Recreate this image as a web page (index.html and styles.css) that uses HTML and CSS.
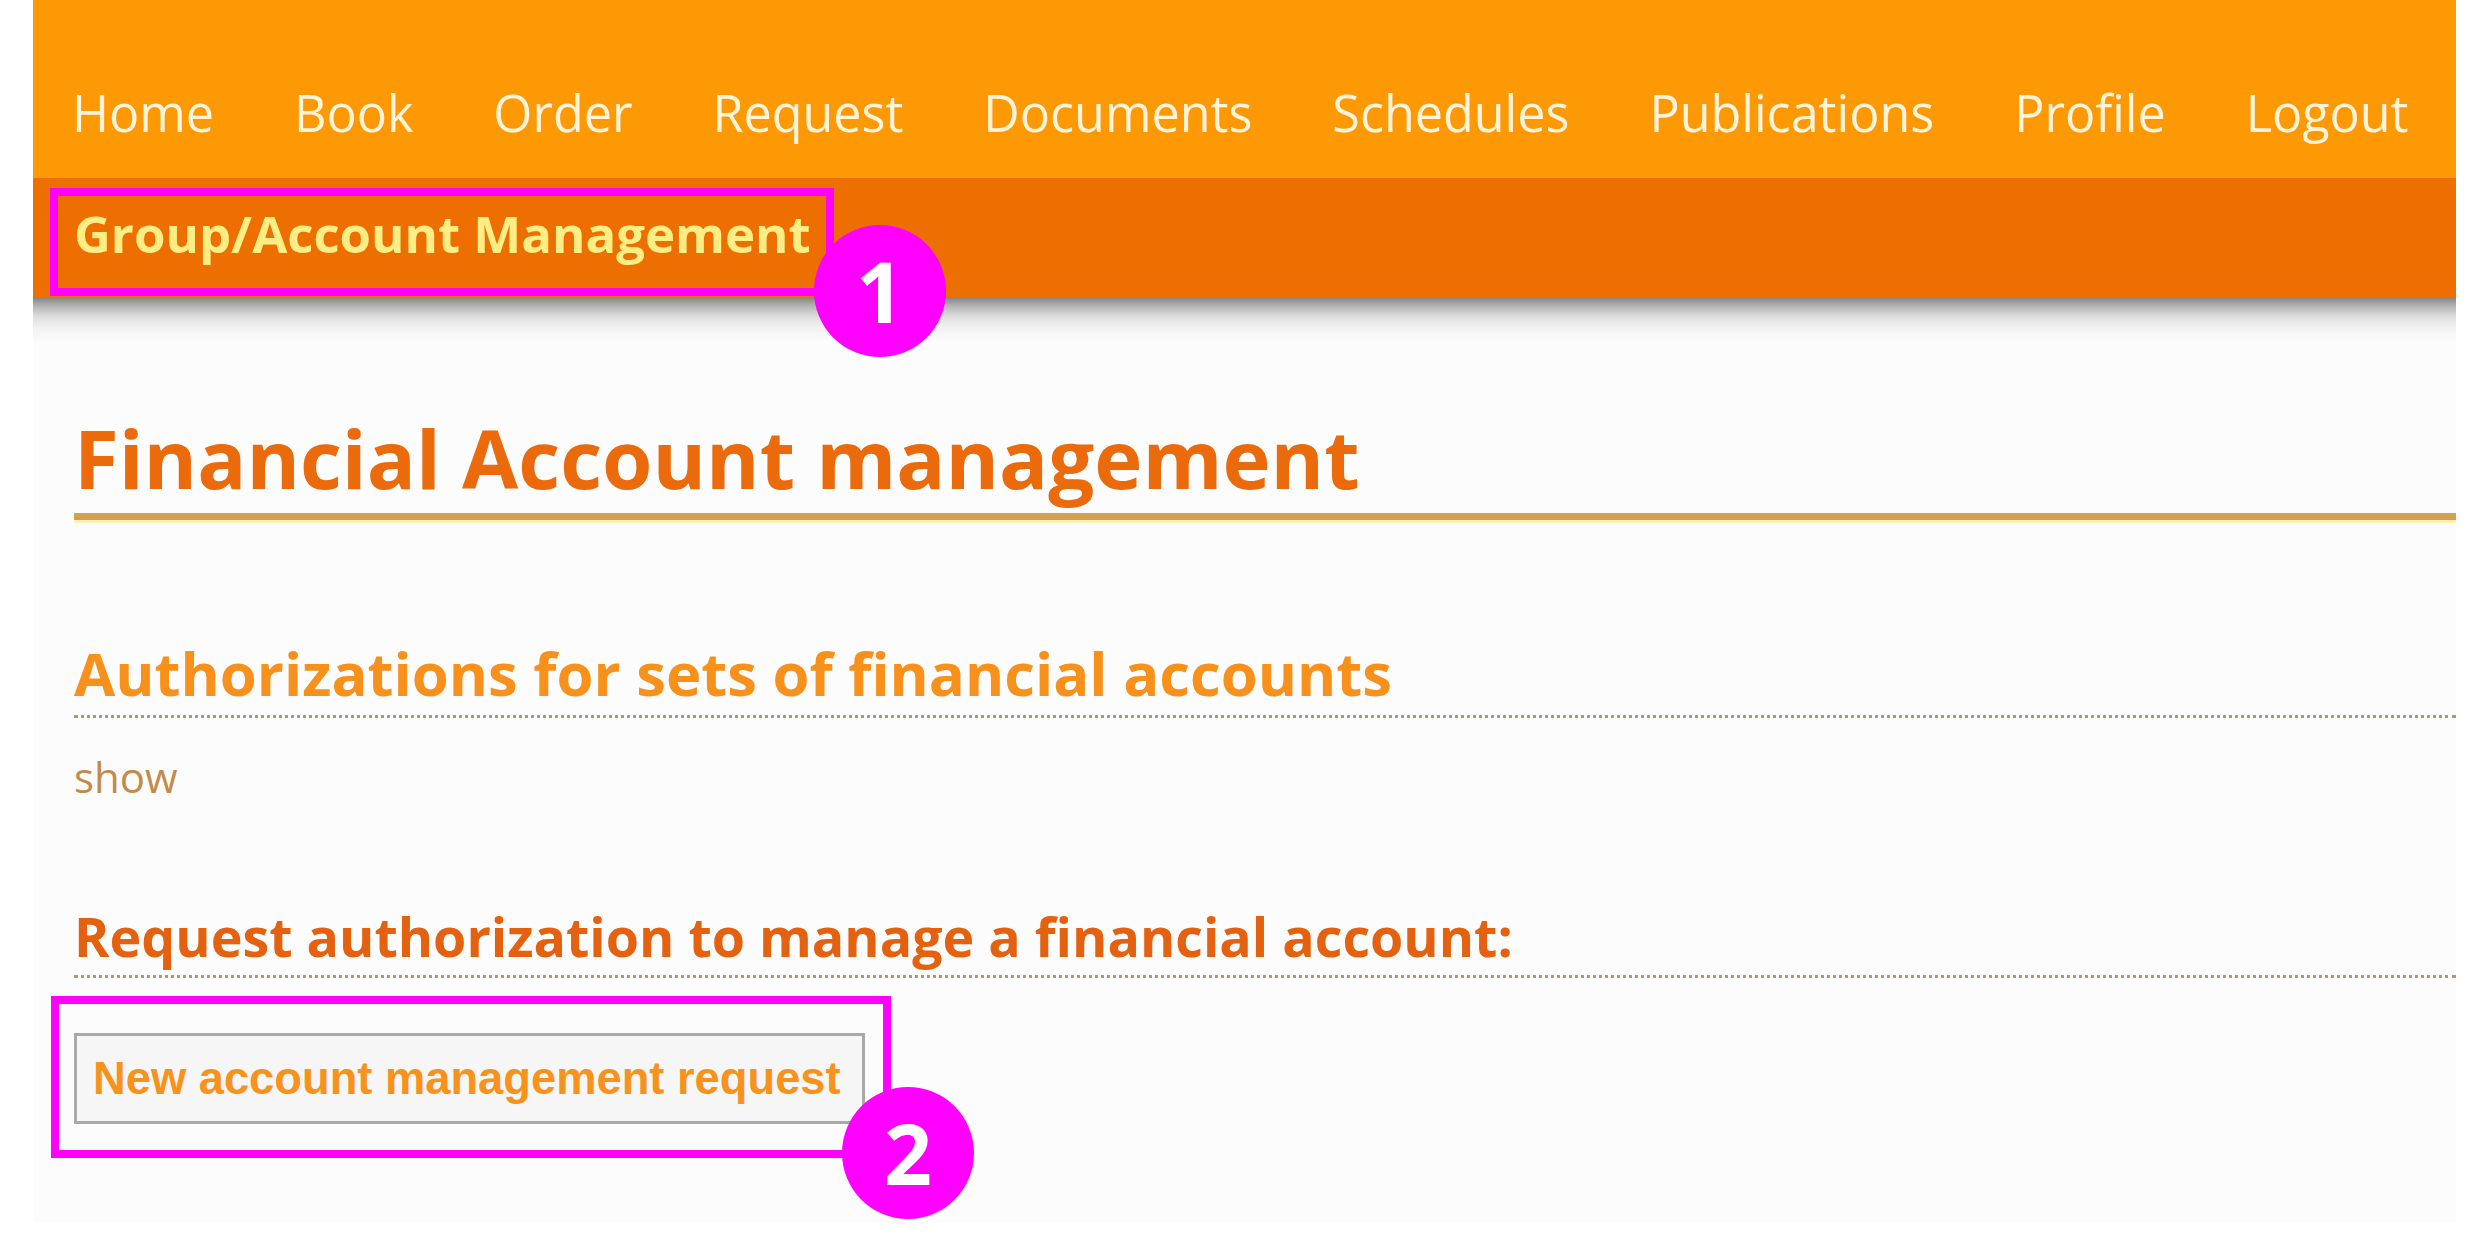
FILE: index.html
```html
<!DOCTYPE html>
<html lang="en">
<head>
<meta charset="utf-8">
<title>Financial Account management</title>
<link rel="stylesheet" href="styles.css">
</head>
<body>
<div class="page">
  <header class="header">
    <nav class="mainnav">
      <a href="#">Home</a>
      <a href="#">Book</a>
      <a href="#">Order</a>
      <a href="#">Request</a>
      <a href="#">Documents</a>
      <a href="#">Schedules</a>
      <a href="#">Publications</a>
      <a href="#">Profile</a>
      <a href="#">Logout</a>
    </nav>
    <nav class="subnav">
      <a href="#">Group/Account Management</a>
    </nav>
  </header>
  <main class="content">
    <h1 class="title">Financial Account management</h1>
    <h2 class="section">Authorizations for sets of financial accounts</h2>
    <a class="toggle" href="#">show</a>
    <h3 class="section-sub">Request authorization to manage a financial account:</h3>
    <button class="btn" type="button">New account management request</button>
  </main>

  <div class="mark mark-one"></div>
  <div class="badge badge-one">1</div>
  <div class="mark mark-two"></div>
  <div class="badge badge-two">2</div>
</div>
</body>
</html>
```

FILE: styles.css
```css
html, body {
  margin: 0;
  padding: 0;
  background: #ffffff;
}

body {
  font-family: "Open Sans", "DejaVu Sans", sans-serif;
  width: 2481px;
  height: 1242px;
  overflow: hidden;
}

.page {
  position: relative;
  margin: 0 25px 0 33px;
  display: flex;
  flex-direction: column;
}

.header {
  display: flex;
  flex-direction: column;
}

.mainnav {
  background: #fe9906;
  height: 178px;
  box-sizing: border-box;
  padding: 79px 0 0 39px;
  display: flex;
  gap: 80px;
}

.mainnav a {
  color: #fff4da;
  text-decoration: none;
  font-size: 50.25px;
  line-height: 68px;
  font-weight: 400;
}

.subnav {
  background: #ed6f02;
  height: 120px;
  box-sizing: border-box;
  padding: 22px 0 0 41px;
  display: flex;
}

.subnav a {
  color: #fcee84;
  text-decoration: none;
  font-size: 50.9px;
  line-height: 68px;
  font-weight: 700;
}

.content {
  background:
    linear-gradient(to bottom, #868686 0px, #b4b4b4 8px, #dcdcdc 18px, #f2f2f2 30px, #fcfcfc 44px) no-repeat top left / 100% 44px,
    #fcfcfc;
  height: 924px;
  box-sizing: border-box;
  padding: 109px 0 0 41px;
  display: flex;
  flex-direction: column;
  align-items: flex-start;
}

.title {
  margin: 0;
  align-self: stretch;
  color: #ea6a0c;
  font-size: 81.5px;
  line-height: 101px;
  font-weight: 700;
  padding-bottom: 5px;
  border-bottom: 7px solid #d4a050;
  box-shadow: 0 3px 0 #fff0b6;
}

.section {
  margin: 116px 0 0 0;
  align-self: stretch;
  color: #f7911b;
  font-size: 59.8px;
  line-height: 75px;
  font-weight: 700;
  padding-bottom: 4px;
  border-bottom: 3px dotted #b9966a;
}

.toggle {
  margin-top: 30px;
  color: #c38b49;
  text-decoration: none;
  font-size: 42px;
  line-height: 57px;
}

.section-sub {
  margin: 97px 0 0 0;
  align-self: stretch;
  color: #e3610f;
  font-size: 53.8px;
  line-height: 69px;
  font-weight: 700;
  padding-bottom: 4px;
  border-bottom: 3px dotted #b9966a;
}

.btn {
  margin-top: 55px;
  font-family: "Liberation Sans", Arial, sans-serif;
  font-weight: 700;
  font-size: 45.3px;
  line-height: 52px;
  color: #f7921c;
  background: #f6f6f6;
  border: 3px solid #a9a9a9;
  border-radius: 0;
  padding: 17px 21px 16px 16px;
}

/* annotation overlays */
.mark {
  position: absolute;
  border: 8px solid #ff00ff;
  box-sizing: border-box;
}

.mark-one {
  left: 17px;
  top: 188px;
  width: 784px;
  height: 108px;
}

.mark-two {
  left: 18px;
  top: 996px;
  width: 840px;
  height: 162px;
}

.badge {
  position: absolute;
  width: 132px;
  height: 132px;
  border-radius: 50%;
  background: #ff00ff;
  color: #ffffff;
  font-family: "Open Sans", "DejaVu Sans", sans-serif;
  font-weight: 700;
  font-size: 84px;
  line-height: 132px;
  text-align: center;
}

.badge-one {
  left: 781px;
  top: 225px;
}

.badge-two {
  left: 809px;
  top: 1087px;
}
```
